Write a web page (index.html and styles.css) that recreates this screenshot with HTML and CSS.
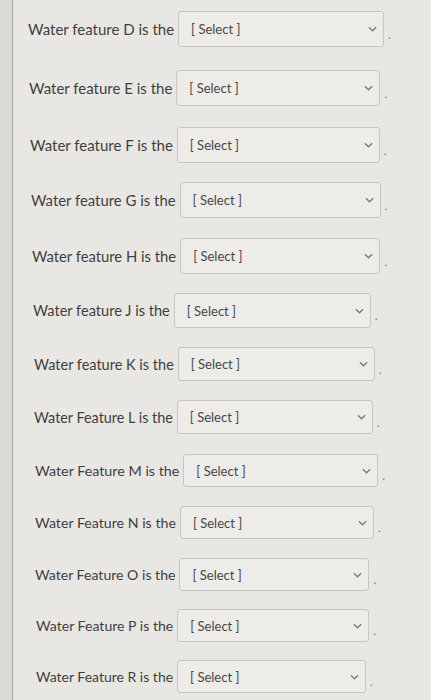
FILE: index.html
```html
<!DOCTYPE html>
<html lang="en">
<head>
<meta charset="utf-8">
<title>Water features</title>
<link rel="stylesheet" href="styles.css">
</head>
<body>
<div class="panel">
  <div class="row"><span class="label">Water feature D is the</span><span class="select"><span class="ph">[ Select ]</span><svg class="chev" viewBox="0 0 10 6" width="9" height="6"><path d="M1 1 L5 5 L9 1" fill="none" stroke="#7a7874" stroke-width="1.4"/></svg></span><span class="dot">.</span></div>
  <div class="row"><span class="label">Water feature E is the</span><span class="select"><span class="ph">[ Select ]</span><svg class="chev" viewBox="0 0 10 6" width="9" height="6"><path d="M1 1 L5 5 L9 1" fill="none" stroke="#7a7874" stroke-width="1.4"/></svg></span><span class="dot">.</span></div>
  <div class="row"><span class="label">Water feature F is the</span><span class="select"><span class="ph">[ Select ]</span><svg class="chev" viewBox="0 0 10 6" width="9" height="6"><path d="M1 1 L5 5 L9 1" fill="none" stroke="#7a7874" stroke-width="1.4"/></svg></span><span class="dot">.</span></div>
  <div class="row"><span class="label">Water feature G is the</span><span class="select"><span class="ph">[ Select ]</span><svg class="chev" viewBox="0 0 10 6" width="9" height="6"><path d="M1 1 L5 5 L9 1" fill="none" stroke="#7a7874" stroke-width="1.4"/></svg></span><span class="dot">.</span></div>
  <div class="row"><span class="label">Water feature H is the</span><span class="select"><span class="ph">[ Select ]</span><svg class="chev" viewBox="0 0 10 6" width="9" height="6"><path d="M1 1 L5 5 L9 1" fill="none" stroke="#7a7874" stroke-width="1.4"/></svg></span><span class="dot">.</span></div>
  <div class="row"><span class="label">Water feature J is the</span><span class="select"><span class="ph">[ Select ]</span><svg class="chev" viewBox="0 0 10 6" width="9" height="6"><path d="M1 1 L5 5 L9 1" fill="none" stroke="#7a7874" stroke-width="1.4"/></svg></span><span class="dot">.</span></div>
  <div class="row"><span class="label">Water feature K is the</span><span class="select"><span class="ph">[ Select ]</span><svg class="chev" viewBox="0 0 10 6" width="9" height="6"><path d="M1 1 L5 5 L9 1" fill="none" stroke="#7a7874" stroke-width="1.4"/></svg></span><span class="dot">.</span></div>
  <div class="row"><span class="label">Water Feature L is the</span><span class="select"><span class="ph">[ Select ]</span><svg class="chev" viewBox="0 0 10 6" width="9" height="6"><path d="M1 1 L5 5 L9 1" fill="none" stroke="#7a7874" stroke-width="1.4"/></svg></span><span class="dot">.</span></div>
  <div class="row"><span class="label">Water Feature M is the</span><span class="select"><span class="ph">[ Select ]</span><svg class="chev" viewBox="0 0 10 6" width="9" height="6"><path d="M1 1 L5 5 L9 1" fill="none" stroke="#7a7874" stroke-width="1.4"/></svg></span><span class="dot">.</span></div>
  <div class="row"><span class="label">Water Feature N is the</span><span class="select"><span class="ph">[ Select ]</span><svg class="chev" viewBox="0 0 10 6" width="9" height="6"><path d="M1 1 L5 5 L9 1" fill="none" stroke="#7a7874" stroke-width="1.4"/></svg></span><span class="dot">.</span></div>
  <div class="row"><span class="label">Water Feature O is the</span><span class="select"><span class="ph">[ Select ]</span><svg class="chev" viewBox="0 0 10 6" width="9" height="6"><path d="M1 1 L5 5 L9 1" fill="none" stroke="#7a7874" stroke-width="1.4"/></svg></span><span class="dot">.</span></div>
  <div class="row"><span class="label">Water Feature P is the</span><span class="select"><span class="ph">[ Select ]</span><svg class="chev" viewBox="0 0 10 6" width="9" height="6"><path d="M1 1 L5 5 L9 1" fill="none" stroke="#7a7874" stroke-width="1.4"/></svg></span><span class="dot">.</span></div>
  <div class="row"><span class="label">Water Feature R is the</span><span class="select"><span class="ph">[ Select ]</span><svg class="chev" viewBox="0 0 10 6" width="9" height="6"><path d="M1 1 L5 5 L9 1" fill="none" stroke="#7a7874" stroke-width="1.4"/></svg></span><span class="dot">.</span></div>
</div>
</body>
</html>
```
FILE: styles.css
```css
html, body {
  margin: 0;
  padding: 0;
  background: #dcdad6;
  height: 100%;
}
body {
  font-family: Lato, "Open Sans", sans-serif;
  color: #3f3f3f;
}
.panel {
  margin-left: 12px;
  border-left: 1px solid #a9a7a3;
  background: #e9e7e3;
  min-height: 700px;
  padding: 11px 0 0 15px;
  box-sizing: border-box;
}
.row {
  display: flex;
  align-items: center;
  height: 36px;
  margin-bottom: 19px;
  font-size: 15px;
}
.label {
  white-space: nowrap;
}
.select {
  display: flex;
  align-items: center;
  justify-content: space-between;
  box-sizing: border-box;
  width: 206px;
  height: 100%;
  margin-left: 4px;
  padding: 0 6px 0 12px;
  border: 1px solid #c8c6c1;
  border-radius: 3px;
  background: #edece8;
}
.ph {
  font-size: 13px;
  color: #474747;
}
.chev {
  display: block;
}
.dot {
  font-size: 12px;
  color: #777;
  margin-left: 4px;
  margin-top: 10px;
}

/* slight perspective of the photographed screen */
.row:nth-child(1)  { margin-bottom: 23px; }
.row:nth-child(2)  { margin-bottom: 21px; padding-left: 1px; }
.row:nth-child(3)  { margin-bottom: 19px; padding-left: 2px; }
.row:nth-child(4)  { margin-bottom: 20px; padding-left: 3px; font-size: 14.9px; }
.row:nth-child(5)  { margin-bottom: 19px; padding-left: 4px; font-size: 14.8px; }
.row:nth-child(6)  { margin-bottom: 19px; padding-left: 5px; font-size: 14.6px; height: 35px; }
.row:nth-child(7)  { margin-bottom: 19px; padding-left: 6px; font-size: 14.5px; height: 34px; }
.row:nth-child(8)  { margin-bottom: 20px; padding-left: 6px; font-size: 14.4px; height: 34px; }
.row:nth-child(9)  { margin-bottom: 19px; padding-left: 7px; font-size: 14.3px; height: 33px; }
.row:nth-child(10) { margin-bottom: 19px; padding-left: 7px; font-size: 14.2px; height: 33px; }
.row:nth-child(11) { margin-bottom: 18px; padding-left: 7px; font-size: 14.1px; height: 33px; }
.row:nth-child(12) { margin-bottom: 18px; padding-left: 8px; font-size: 14.1px; height: 33px; }
.row:nth-child(13) { padding-left: 8px; font-size: 14px; height: 33px; }

.row:nth-child(2)  .select { width: 204px; }
.row:nth-child(3)  .select { width: 203px; }
.row:nth-child(4)  .select { width: 201px; }
.row:nth-child(5)  .select { width: 200px; }
.row:nth-child(6)  .select { width: 197px; }
.row:nth-child(7)  .select { width: 197px; }
.row:nth-child(8)  .select { width: 196px; }
.row:nth-child(9)  .select { width: 195px; }
.row:nth-child(10) .select { width: 194px; }
.row:nth-child(11) .select { width: 190px; }
.row:nth-child(12) .select { width: 192px; }
.row:nth-child(13) .select { width: 189px; }
```
